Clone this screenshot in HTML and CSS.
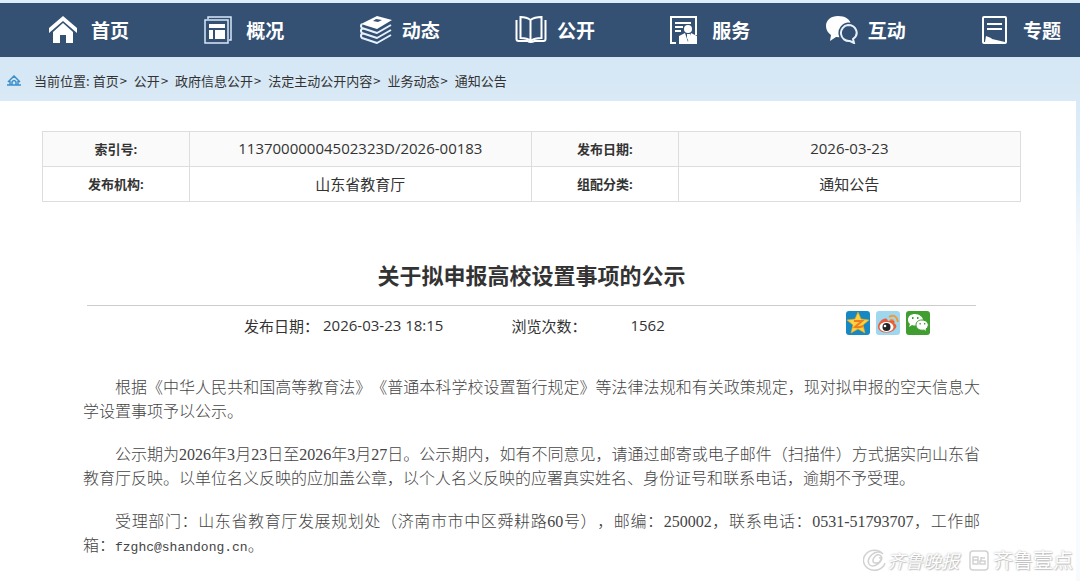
FILE: index.html
```
<!DOCTYPE html>
<html lang="zh-CN">
<head>
    <meta charset="UTF-8">
    <meta name="viewport" content="width=device-width, initial-scale=1.0">
    <title>关于拟申报高校设置事项的公示</title>
    <link rel="stylesheet" href="styles.css">
</head>
<body>
    <nav class="main-nav">
        <a href="#">
            <svg viewBox="0 0 28 28"><path fill="#fff" d="M14 0L0 12v5L14 5l14 12v-5z"/><path fill="#fff" d="M14 7L4 16v11h7v-8h6v8h7V16z"/></svg>
            首页
        </a>
        <a href="#">
            <svg viewBox="0 0 28 28" fill="none" stroke="#d7e8f8" stroke-width="1.5"><path d="M4 3V1h23v23h-2"/><path d="M1 4h23v23H1z"/><path fill="#fff" stroke="none" d="M5 8h16v4H5zM5 14h4v9H5zM11 14h10v9H11z"/></svg>
            概况
        </a>
        <a href="#">
            <svg class="wide" viewBox="0 0 32 28" fill="none" stroke="#e6f1fb" stroke-width="2" stroke-linejoin="round"><path fill="#fff" fill-rule="evenodd" stroke="none" d="M17 0l15 4-15 9L1 8zM16 3l-3 2 5 1 4-2z"/><path d="M2 8q-2 2 0 4l15 5 14-8M2 12q-2 3 0 5l15 5 14-8M2 17q-2 3 0 5l15 5 14-8"/></svg>
            动态
        </a>
        <a href="#">
            <svg class="wide" viewBox="0 0 31 28" fill="none" stroke="#fff" stroke-width="2"><path d="M15 4Q11 1 5 1v21q7 0 10 3 4-3 11-3V1q-7 0-11 3zM15 4v21"/><path d="M1 4v19q0 2 2 2h9q3 2 7 0h9q2 0 2-2V4"/></svg>
            公开
        </a>
        <a href="#">
            <svg viewBox="0 0 28 28" fill="none" stroke="#fff" stroke-width="2"><path d="M6 27H1V1h25v18M5 7h16M5 11h8M5 15h6"/><circle cx="18" cy="13" r="4" fill="#fff" stroke="none"/><path fill="#fff" stroke="none" d="M9 28v-8l6-3 3 9 3-9 6 3v8z"/><path fill="#fff" stroke="none" d="M17 18h3l1 4-2 4-2-4z"/></svg>
            服务
        </a>
        <a href="#">
            <svg class="wide" viewBox="0 0 32 28"><path fill="#fff" d="M12 0C5 0 0 4 0 10c0 4 2 7 5 9l-1 6 6-4c9 1 15-4 15-11S19 0 12 0z"/><path fill="#345174" stroke="#345174" stroke-width="5" d="M22 9a8 8 0 1 0 2 16l4 2-1-4c7-5 3-14-5-14z"/><path fill="#345174" stroke="#e6f1fb" stroke-width="2" d="M22 9a8 8 0 1 0 2 16l4 2-1-4c7-5 3-14-5-14z"/></svg>
            互动
        </a>
        <a href="#">
            <svg viewBox="0 0 28 28" fill="none" stroke="#fff" stroke-width="2"><rect x="2" y="1" width="23" height="26" rx="1"/><path d="M6 8h15M6 13h15"/><path fill="#fff" stroke="none" d="M4 26l1-6 5 2 1 1 13 3z"/></svg>
            专题
        </a>
    </nav>

    <div class="breadcrumb">
        <svg viewBox="0 0 14 11" fill="none" stroke="#3d8fcb" stroke-width="1.5"><path d="M0 10h14M1 7l6-6 6 6M3 6v4M11 6v4M5 10V7q2-3 4 0v3"/></svg>
        <span class="here">当前位置:</span>
        <a href="#">首页</a><span class="sep">&gt;</span>
        <a href="#">公开</a><span class="sep">&gt;</span>
        <a href="#">政府信息公开</a><span class="sep">&gt;</span>
        <a href="#">法定主动公开内容</a><span class="sep">&gt;</span>
        <a href="#">业务动态</a><span class="sep">&gt;</span>
        <a href="#">通知公告</a>
    </div>

    <main class="content">
        <table class="info">
            <tr>
                <th scope="row">索引号:</th>
                <td>11370000004502323D/2026-00183</td>
                <th scope="row">发布日期:</th>
                <td>2026-03-23</td>
            </tr>
            <tr>
                <th scope="row">发布机构:</th>
                <td>山东省教育厅</td>
                <th scope="row">组配分类:</th>
                <td>通知公告</td>
            </tr>
        </table>

        <article>
            <h1>关于拟申报高校设置事项的公示</h1>
            <div class="meta">
                <div class="date"><span>发布日期：</span><span>2026-03-23 18:15</span></div>
                <div class="views"><span>浏览次数：</span><span>1562</span></div>
                <div class="share">
                    <a href="#" aria-label="QQ空间">
                        <svg viewBox="0 0 24 24"><rect width="24" height="24" rx="3" fill="#1688c4"/><path fill="#fdd23c" stroke="#e9a51f" stroke-width=".7" stroke-linejoin="round" d="M12 1l3 7 8 1-6 5 2 8-7-4-7 4 2-8-6-5 8-1z"/><path d="M8 10h8l-7 6q4 1 8-1" fill="none" stroke="#ed7d20" stroke-width="2"/></svg>
                    </a>
                    <a href="#" aria-label="新浪微博">
                        <svg viewBox="0 0 24 24"><rect width="24" height="24" rx="3" fill="#9fd7ee"/><path d="M13 6q7-4 9 5M14 9q4-1 4 3" fill="none" stroke="#f19a38" stroke-width="2"/><path fill="#e75d3c" d="M2 16c0-5 6-10 9-8l1 2c5-2 7 0 6 2 3 2 3 4 1 6-5 6-17 4-17-2z"/><ellipse cx="10.500" cy="16" rx="7" ry="5" fill="#fff"/><circle cx="10.500" cy="16" r="4" fill="#222"/><circle cx="9" cy="15" r="1.300" fill="#fff"/></svg>
                    </a>
                    <a href="#" aria-label="微信">
                        <svg viewBox="0 0 24 24"><rect width="24" height="24" rx="3" fill="#3f9e2f"/><path fill="#fff" d="M9 3c-4 0-7 2-7 6 0 2 1 3 2 4l-1 3 3-2q3 1 5 0c4 0 6-2 6-5s-4-6-8-6z"/><path fill="#fff" stroke="#3f9e2f" d="M16 9c-4 0-6 2-6 5s3 6 8 5l3 2-1-3c5-4 1-9-4-9z"/><path fill="#3f9e2f" d="M6 6h1.500v2H6zM11 6h1.500v2H11zM13.500 12h1.300v1.500h-1.300zM18 12h1.300v1.500H18z"/></svg>
                    </a>
                </div>
            </div>
            <div class="text">
                <p>根据《中华人民共和国高等教育法》《普通本科学校设置暂行规定》等法律法规和有关政策规定，现对拟申报的空天信息大学设置事项予以公示。</p>
                <p>公示期为2026年3月23日至2026年3月27日。公示期内，如有不同意见，请通过邮寄或电子邮件（扫描件）方式据实向山东省教育厅反映。以单位名义反映的应加盖公章，以个人名义反映的应署真实姓名、身份证号和联系电话，逾期不予受理。</p>
                <p>受理部门：山东省教育厅发展规划处（济南市市中区舜耕路60号），邮编：250002，联系电话：0531-51793707，工作邮箱：<span class="mail">fzghc@shandong.cn</span>。</p>
            </div>
        </article>
    </main>

    <div class="watermark">
        <svg viewBox="0 0 24 24" fill="none" stroke="#d2d2d2" stroke-width="1.500"><path d="M20 5A11 10 0 1 0 22 14M19 4C12 0 3 9 6 15s16-3 12-8-12 6-6 7 8-7 4-5"/></svg>
        <span class="paper">齐鲁晚报</span>
        <svg viewBox="0 0 24 24" fill="none" stroke="#d2d2d2" stroke-width="1.500"><rect x="3" y="2" width="18" height="19" rx="3"/><path d="M6 8h5v7H6zM6 11h5M14 8v4M13 12h5v3h-5zM14 9h4"/></svg>
        <span class="app">齐鲁壹点</span>
    </div>
</body>
</html>
```
FILE: styles.css
```
* {
    box-sizing: border-box;
}

body {
    margin: 0;
    min-height: 100vh;
    display: flex;
    flex-direction: column;
    position: relative;
    background: linear-gradient(#d0e3f3, #d9e9f6 100px, #e3f0fa 180px, #f8fbfe 260px);
    border-top: 3px solid #dcedf9;
    font-family: "Open Sans", "Noto Sans CJK SC", sans-serif;
    font-size: 15px;
    color: #333;
}

a {
    color: inherit;
    text-decoration: none;
}

.main-nav {
    display: flex;
    justify-content: space-between;
    align-items: center;
    height: 54px;
    padding: 0 19px 0 49px;
    background: #345174;
    color: #fff;
    font-size: 19px;
    font-weight: bold;
}

.main-nav a {
    display: flex;
    align-items: center;
    gap: 14px;
}

.main-nav svg {
    width: 28px;
    height: 28px;
}

.main-nav .wide {
    width: 32px;
    margin-right: -4px;
}

.breadcrumb {
    display: flex;
    align-items: center;
    height: 44px;
    padding: 2px 7px 0;
    font-family: "Noto Sans CJK SC", sans-serif;
    font-size: 13px;
}

.breadcrumb svg {
    width: 14px;
    height: 11px;
    margin-right: 13px;
}

.here {
    margin-right: 3px;
}

.sep {
    margin: 0 7px 0 1px;
}

.content {
    flex: 1;
    margin-right: 4px;
    padding: 30px 55px 0 42px;
    background: #fff;
}

.info {
    width: 100%;
    table-layout: fixed;
    border-collapse: collapse;
    text-align: center;
}

.info th,
.info td {
    height: 35px;
    padding: 0 0 2px;
    border: 1px solid #ddd;
}

.info th {
    width: 15%;
    font-size: 13px;
}

.info tr:first-child {
    background: #fafafa;
}

article {
    padding: 0 45px;
}

h1 {
    margin: 57px 0 0;
    padding-bottom: 14px;
    border-bottom: 1px solid #ccc;
    font-size: 22px;
    line-height: 32px;
    text-align: center;
}

.meta {
    display: flex;
    align-items: center;
    height: 40px;
    padding: 0 46px 2px 157px;
}

.date {
    display: flex;
    gap: 4px;
    margin-right: 68px;
}

.views {
    display: flex;
    gap: 44px;
}

.share {
    display: flex;
    gap: 6px;
    margin-left: auto;
    padding-bottom: 4px;
}

.share svg {
    display: block;
    width: 24px;
    height: 24px;
}

/* the body copy runs a little wider than the rule above it */
.text {
    margin: 0 -4px;
    padding-top: 30px;
    color: #444;
    font-family: "Liberation Serif", "Noto Sans CJK SC", serif;
    font-size: 16px;
    font-weight: 300;
    line-height: 24px;
    text-align: justify;
    text-spacing-trim: space-all;
}

.text p {
    margin: 0 0 19px;
    text-indent: 2em;
}

.text p:last-child {
    margin-bottom: 0;
}

.mail {
    font-family: "Liberation Mono", monospace;
    font-size: 13px;
}

.watermark {
    position: absolute;
    right: 7px;
    bottom: 8px;
    display: flex;
    align-items: center;
    color: #fff;
    line-height: 20px;
    text-shadow: 0 0 2px #aaa, 1px 1px 1px #ccc;
}

.watermark svg {
    width: 24px;
    height: 24px;
}

.paper {
    margin-right: 8px;
    font-size: 18px;
    font-style: italic;
}

.app {
    margin-left: 2px;
    font-size: 20px;
}
```
